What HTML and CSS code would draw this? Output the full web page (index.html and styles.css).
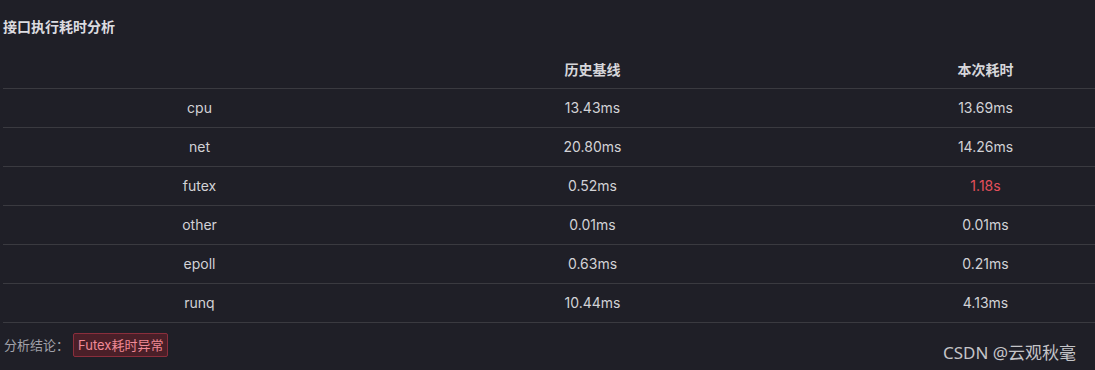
FILE: index.html
```html
<!DOCTYPE html>
<html lang="zh">
<head>
<meta charset="utf-8">
<link rel="stylesheet" href="styles.css">
</head>
<body>
<div class="page">
  <div class="title">接口执行耗时分析</div>
  <table class="grid">
    <colgroup>
      <col class="c1"><col class="c2"><col class="c3">
    </colgroup>
    <thead>
      <tr><th></th><th>历史基线</th><th class="last">本次耗时</th></tr>
    </thead>
    <tbody>
      <tr><td>cpu</td><td>13.43ms</td><td class="last">13.69ms</td></tr>
      <tr><td>net</td><td>20.80ms</td><td class="last">14.26ms</td></tr>
      <tr><td>futex</td><td>0.52ms</td><td class="last bad">1.18s</td></tr>
      <tr><td>other</td><td>0.01ms</td><td class="last">0.01ms</td></tr>
      <tr><td>epoll</td><td>0.63ms</td><td class="last">0.21ms</td></tr>
      <tr><td>runq</td><td>10.44ms</td><td class="last">4.13ms</td></tr>
    </tbody>
  </table>
  <div class="conclusion">
    <span class="label">分析结论：</span>
    <span class="tag">Futex耗时异常</span>
  </div>
  <div class="watermark">CSDN @云观秋毫</div>
</div>
</body>
</html>
```

FILE: styles.css
```css
html, body {
  margin: 0;
  padding: 0;
  background: #1f1f27;
  width: 1095px;
  height: 370px;
  overflow: hidden;
}
.page {
  position: relative;
  width: 1095px;
  height: 370px;
  font-family: "Inter", "Noto Sans CJK SC", sans-serif;
  color: #d2d2d6;
}
.title {
  padding: 17px 0 0 3px;
  box-sizing: border-box;
  height: 49px;
  font-size: 14px;
  font-weight: 700;
  line-height: 18px;
  color: #dcdce0;
  font-family: "Noto Sans CJK SC", sans-serif;
}
.grid {
  margin-left: 3px;
  width: 1092px;
  border-collapse: collapse;
  table-layout: fixed;
}
.c1, .c2 { width: 393px; }
.c3 { width: 306px; }
.grid th, .grid td {
  height: 39px;
  padding: 0;
  text-align: center;
  font-size: 14px;
  box-sizing: border-box;
}
.grid th.last, .grid td.last {
  padding-left: 87px;
}
.grid th {
  font-family: "Noto Sans CJK SC", sans-serif;
  font-weight: 700;
  color: #d6d6da;
  border-bottom: 1px solid #3a3a40;
  padding-top: 1px;
}
.grid td {
  border-bottom: 1px solid #3a3a40;
  color: #d2d2d6;
}
.grid td.bad {
  color: #e4505c;
}
.conclusion {
  display: flex;
  align-items: center;
  padding: 10px 0 0 4px;
  gap: 4px;
}
.label {
  font-size: 13px;
  color: #a2a2aa;
  font-family: "Noto Sans CJK SC", sans-serif;
}
.tag {
  height: 24px;
  box-sizing: border-box;
  padding: 0 4px;
  display: inline-flex;
  align-items: center;
  font-size: 13px;
  color: #f08a96;
  background: #4a1f28;
  border: 1px solid #8a2e3c;
  border-radius: 2px;
  font-family: "Inter", "Noto Sans CJK SC", sans-serif;
}
.watermark {
  position: absolute;
  left: 943px;
  top: 339px;
  font-size: 17px;
  color: #c4c4c8;
  font-family: "Noto Sans", "Noto Sans CJK SC", sans-serif;
  white-space: nowrap;
}
```
